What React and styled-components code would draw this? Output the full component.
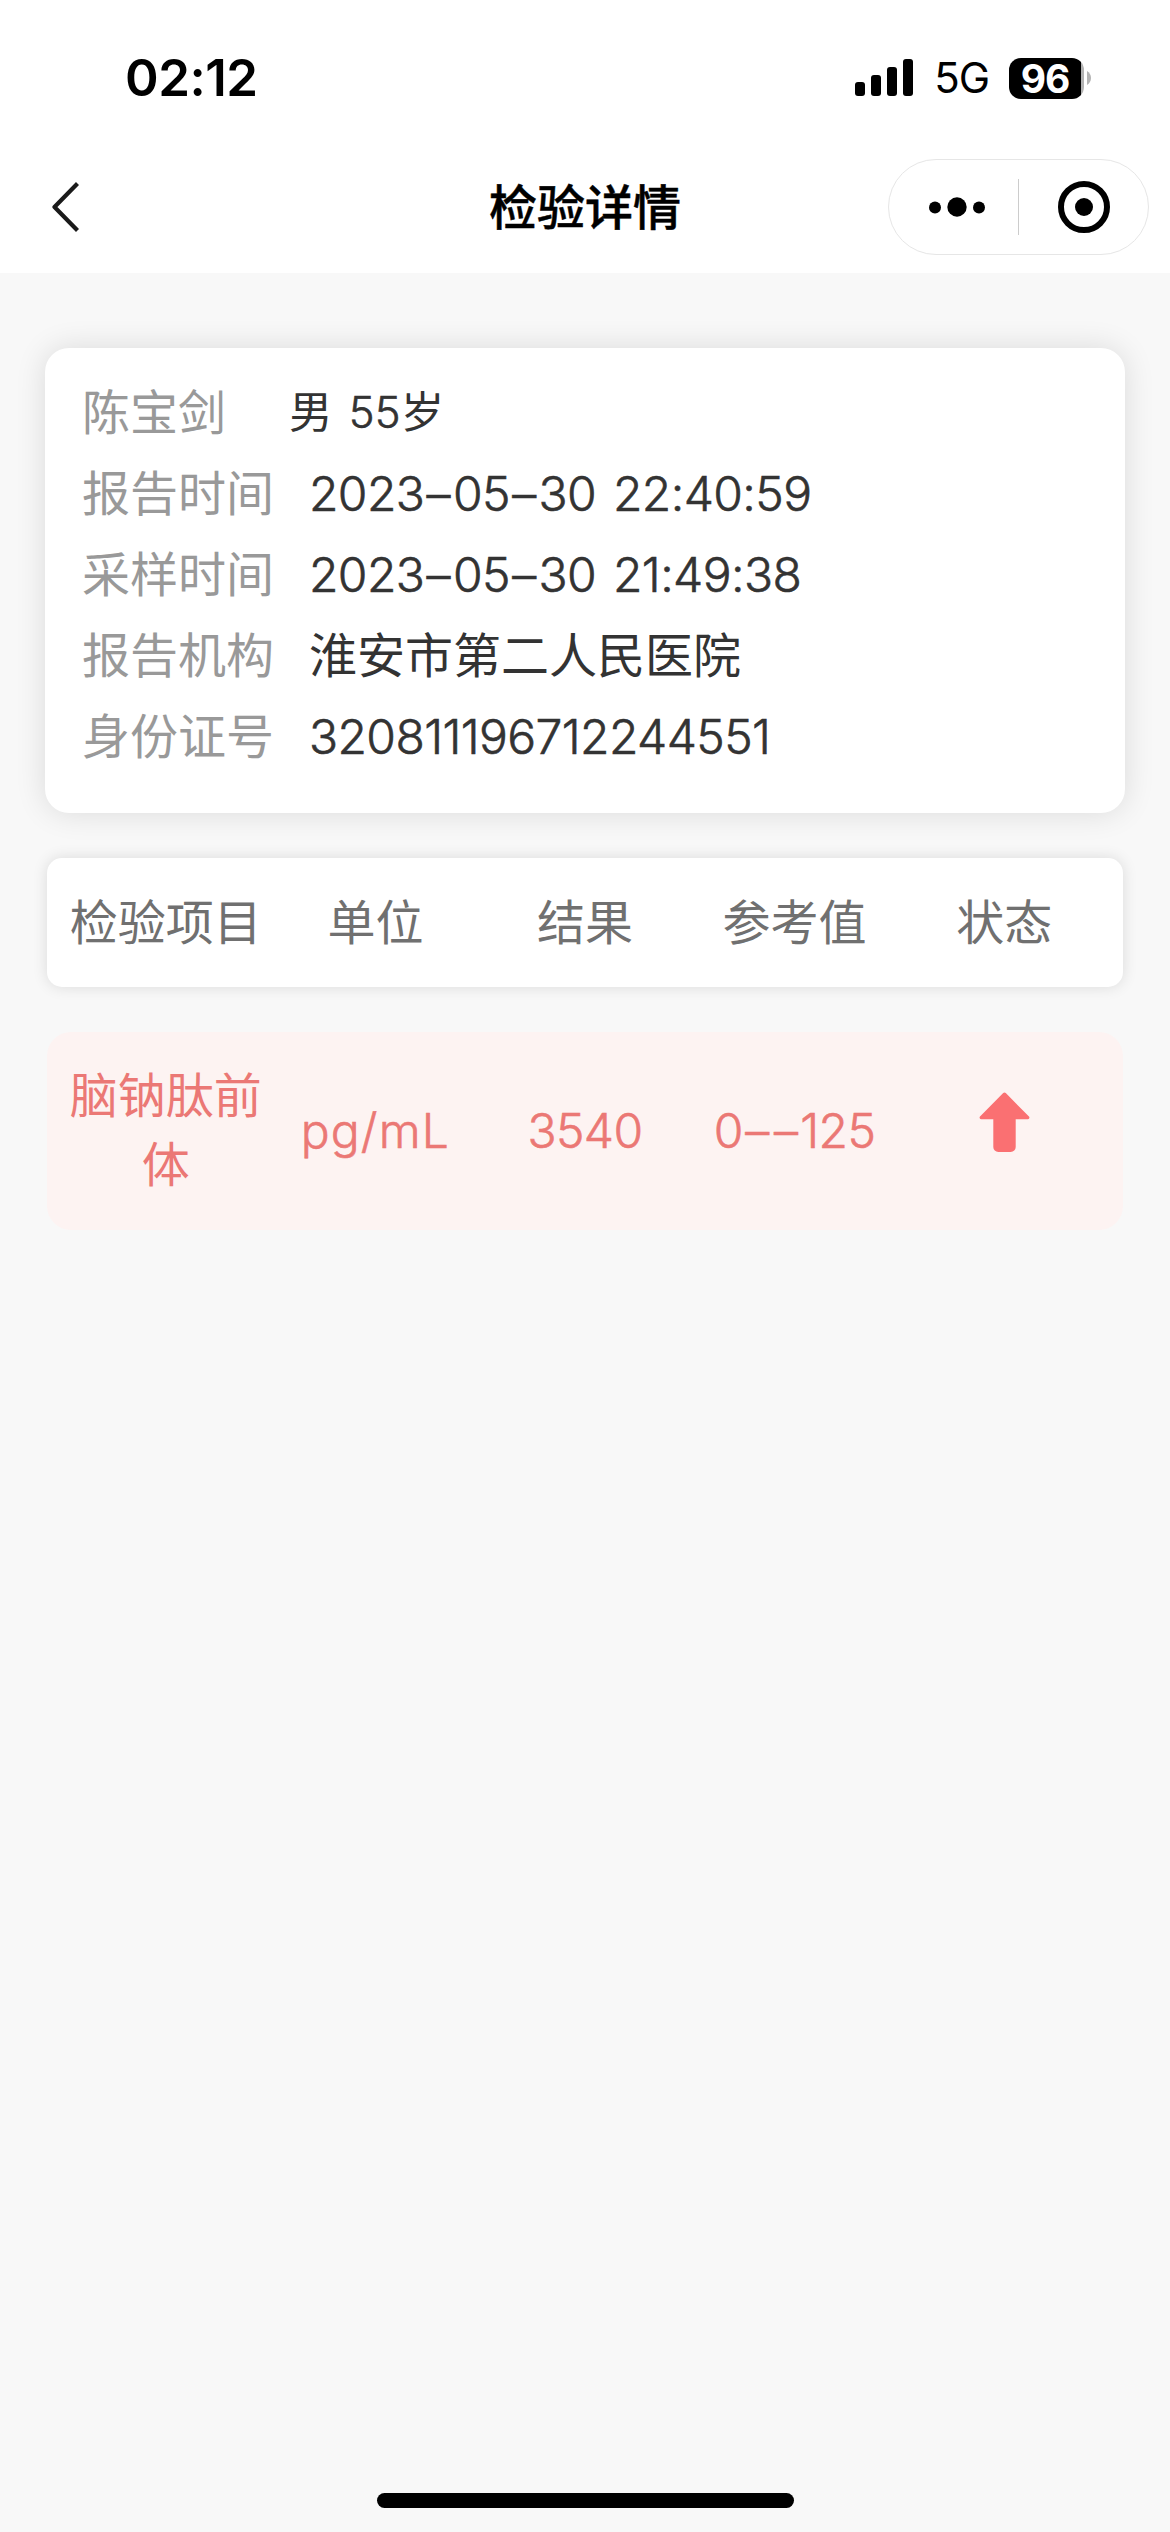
import React from "react";
import styled, { createGlobalStyle } from "styled-components";

const GlobalStyle = createGlobalStyle`
  * {
    box-sizing: border-box;
  }
  body {
    margin: 0;
    background: #f8f8f8;
    font-family: Inter, "Noto Sans CJK SC", sans-serif;
    -webkit-font-smoothing: antialiased;
  }
`;

const Page = styled.div`
  display: flex;
  flex-direction: column;
  width: 1170px;
  height: 2532px;
  background: #f8f8f8;
`;

const StatusBar = styled.div`
  display: flex;
  justify-content: space-between;
  align-items: center;
  height: 141px;
  padding: 15px 79px 0 125px;
  background: #fff;
`;

const Time = styled.span`
  font-size: 51px;
  font-weight: 600;
  line-height: 60px;
  letter-spacing: -0.5px;
  color: #000;
`;

const StatusIcons = styled.div`
  display: flex;
  align-items: center;
`;

const Network = styled.span`
  margin: 0 20px;
  font-size: 42px;
  line-height: 48px;
  letter-spacing: -1px;
`;

const Battery = styled.div`
  display: flex;
  align-items: center;
  gap: 3px;
`;

const BatteryLevel = styled.div`
  width: 75px;
  height: 41px;
  padding-right: 3px;
  border-radius: 12px;
  background: linear-gradient(to right, #000 72px, #b3b3b3 72px);
  color: #fff;
  font-size: 39px;
  font-weight: 700;
  line-height: 41px;
  letter-spacing: -1px;
  text-align: center;
`;

const NavBar = styled.div`
  display: grid;
  grid-template-columns: 261px 1fr 261px;
  align-items: center;
  height: 132px;
  padding: 0 21px;
  background: #fff;
`;

const BackIcon = styled.svg`
  margin-left: 31px;
`;

const Title = styled.h1`
  margin: 0;
  padding-top: 1px;
  font-size: 48px;
  font-weight: 500;
  line-height: 72px;
  text-align: center;
  color: #000;
  -webkit-text-stroke: 0.5px;
`;

const Capsule = styled.div`
  display: flex;
  align-items: center;
  width: 261px;
  height: 96px;
  border: 1px solid #e6e6e6;
  border-radius: 48px;
`;

const CapsuleButton = styled.div`
  display: flex;
  flex: none;
  justify-content: center;
  width: 129px;
  padding-left: ${(props) => (props.$more ? "7px" : "0")};
`;

const Divider = styled.div`
  width: 1px;
  height: 56px;
  background: #ccc;
`;

const InfoCard = styled.div`
  height: 465px;
  margin: 75px 45px 0;
  padding: 24px 37px;
  border-radius: 24px;
  background: #fff;
  box-shadow: 0 0 31px rgba(0, 0, 0, 0.12);
`;

const InfoRow = styled.div`
  display: flex;
  align-items: center;
  height: 81px;
  font-size: 48px;
  line-height: 81px;
  white-space: nowrap;
`;

const Label = styled.span`
  width: ${(props) => (props.$short ? "207px" : "227px")};
  color: #999;
`;

const Value = styled.span`
  color: #333;
  font-size: ${(props) => (props.$small ? "43.5px" : "48px")};
  word-spacing: 4px;
`;

const Digits = styled.span`
  font-weight: 300;
  letter-spacing: ${(props) => props.$spacing || "-0.6px"};
  -webkit-text-stroke: 0.6px;
`;

const Dash = styled.span`
  display: inline-block;
  width: 28.7px;
  letter-spacing: 0;
  text-align: center;
`;

const TableRow = styled.div`
  display: grid;
  grid-template-columns: repeat(5, 1fr);
  align-items: center;
  margin: 45px 47px 0;
  height: ${(props) => (props.$head ? "129px" : "198px")};
  padding: ${(props) => (props.$head ? "0 14px" : "0 14px 2px")};
  border-radius: ${(props) => (props.$head ? "15px" : "24px")};
  background: ${(props) => (props.$head ? "#fff" : "#fdf3f2")};
  box-shadow: ${(props) =>
    props.$head ? "0 0 15px rgba(0, 0, 0, 0.12)" : "none"};
  color: ${(props) => (props.$head ? "#707070" : "#eb7875")};
`;

const Cell = styled.div`
  font-size: 48px;
  line-height: 69px;
  text-align: center;
`;

const ArrowIcon = styled.svg`
  display: block;
  margin: -17px auto 0;
`;

const Footer = styled.div`
  display: flex;
  justify-content: center;
  margin-top: auto;
  padding-bottom: 24px;
`;

const HomeIndicator = styled.div`
  width: 417px;
  height: 15px;
  border-radius: 8px;
  background: #000;
`;

const info = [
  { label: "报告时间", value: "2023–05–30 22:40:59", numeric: true },
  { label: "采样时间", value: "2023–05–30 21:49:38", numeric: true },
  { label: "报告机构", value: "淮安市第二人民医院" },
  { label: "身份证号", value: "320811196712244551", numeric: true },
];

const columns = ["检验项目", "单位", "结果", "参考值", "状态"];

// dashes are as wide as a digit
const NumberText = ({ text }) => (
  <Digits>
    {text
      .split(/(–)/)
      .map((part, i) => (part === "–" ? <Dash key={i}>–</Dash> : part))}
  </Digits>
);

const App = () => {
  return (
    <Page>
      <GlobalStyle />
      <StatusBar>
        <Time>02:12</Time>
        <StatusIcons>
          <svg width="59" height="38" viewBox="0 0 59 38">
            <rect x="0" y="23" width="10" height="14" rx="3" />
            <rect x="16" y="16" width="10" height="21" rx="3" />
            <rect x="32" y="8" width="10" height="29" rx="3" />
            <rect x="48" y="0" width="10" height="37" rx="3" />
          </svg>
          <Network>5G</Network>
          <Battery>
            <BatteryLevel>96</BatteryLevel>
            <svg width="4" height="14" viewBox="0 0 4 14">
              <path d="M0 0C2.5 1.5 4 4 4 7s-1.5 5.5-4 7z" fill="#b3b3b3" />
            </svg>
          </Battery>
        </StatusIcons>
      </StatusBar>

      <NavBar>
        <BackIcon width="28" height="52" viewBox="0 0 28 52" fill="none">
          <path
            d="M25.5 2.5L2.5 26l23 23.5"
            stroke="#1a1a1a"
            strokeWidth="4.2"
            strokeLinejoin="round"
          />
        </BackIcon>
        <Title>检验详情</Title>
        <Capsule>
          <CapsuleButton $more>
            <svg width="56" height="20" viewBox="0 0 56 20">
              <circle cx="6" cy="10.5" r="6" />
              <circle cx="28" cy="10" r="9.7" />
              <circle cx="50" cy="10.5" r="6" />
            </svg>
          </CapsuleButton>
          <Divider />
          <CapsuleButton>
            <svg width="52" height="52" viewBox="0 0 52 52">
              <circle
                cx="26"
                cy="26"
                r="23"
                fill="none"
                stroke="#000"
                strokeWidth="6"
              />
              <circle cx="26" cy="26" r="9" />
            </svg>
          </CapsuleButton>
        </Capsule>
      </NavBar>

      <InfoCard>
        <InfoRow>
          <Label $short>陈宝剑</Label>
          <Value $small>
            男 <Digits $spacing="0.2px">55</Digits>岁
          </Value>
        </InfoRow>
        {info.map((item) => (
          <InfoRow key={item.label}>
            <Label>{item.label}</Label>
            <Value>
              {item.numeric ? <NumberText text={item.value} /> : item.value}
            </Value>
          </InfoRow>
        ))}
      </InfoCard>

      <TableRow $head>
        {columns.map((name) => (
          <Cell key={name}>{name}</Cell>
        ))}
      </TableRow>
      <TableRow>
        <Cell>脑钠肽前体</Cell>
        <Cell>
          <Digits $spacing="1.2px">pg/mL</Digits>
        </Cell>
        <Cell>
          <NumberText text="3540" />
        </Cell>
        <Cell>
          <NumberText text="0––125" />
        </Cell>
        <Cell>
          <ArrowIcon width="51" height="60" viewBox="0 0 51 60" fill="#fa7072">
            <path d="M24.2 1.1a1.8 1.8 0 0 1 2.6 0L50 24.5a1.7 1.7 0 0 1-1.2 2.8H36.7V55a5 5 0 0 1-5 5H19.3a5 5 0 0 1-5-5V27.3H2.2A1.7 1.7 0 0 1 1 24.5z" />
          </ArrowIcon>
        </Cell>
      </TableRow>

      <Footer>
        <HomeIndicator />
      </Footer>
    </Page>
  );
};

export default App;
